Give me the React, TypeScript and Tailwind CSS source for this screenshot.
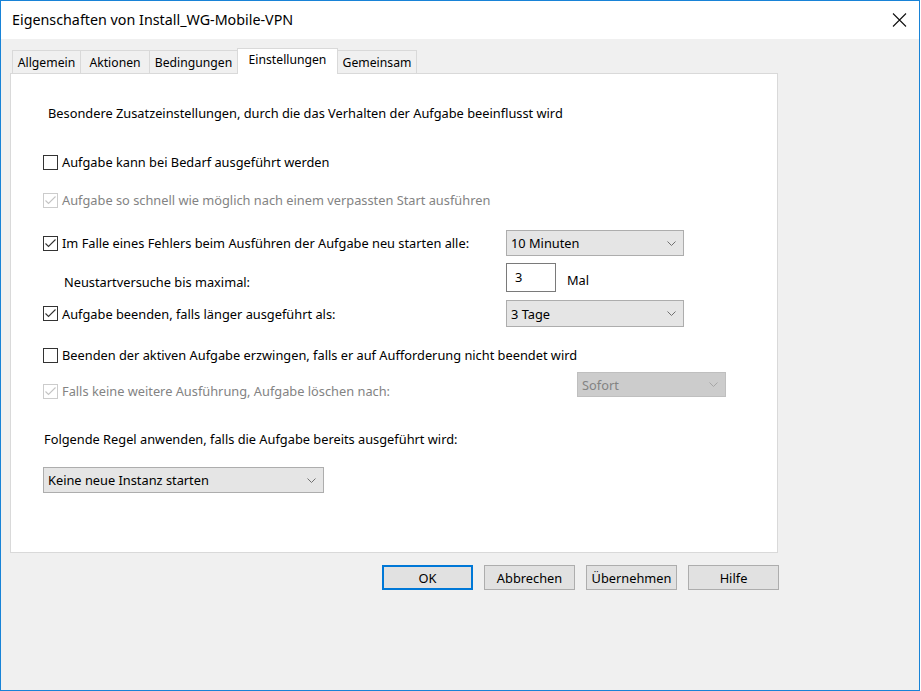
import React from "react";

const font = { fontFamily: '"Noto Sans", "Open Sans", sans-serif' };

function Check({ checked, disabled }: { checked?: boolean; disabled?: boolean }) {
  return (
    <span
      className={
        "flex h-[15px] w-[15px] shrink-0 items-center justify-center border bg-white " +
        (disabled ? "border-[#cccccc]" : "border-[#333333]")
      }
    >
      {checked && (
        <svg width="13" height="13" viewBox="0 0 13 13">
          <polyline
            points="1.5,6.5 4.5,9.5 11.5,2.5"
            fill="none"
            stroke={disabled ? "#c4c4c4" : "#333333"}
            strokeWidth="1.1"
          />
        </svg>
      )}
    </span>
  );
}

function CheckRow({
  label,
  checked,
  disabled,
}: {
  label: string;
  checked?: boolean;
  disabled?: boolean;
}) {
  return (
    <div className="flex h-[20px] items-center gap-[4px]">
      <Check checked={checked} disabled={disabled} />
      <span className={"whitespace-nowrap " + (disabled ? "text-[#838383]" : "text-black")}>{label}</span>
    </div>
  );
}

function Chevron({ disabled }: { disabled?: boolean }) {
  return (
    <svg width="9" height="5" viewBox="0 0 9 5">
      <polyline
        points="0.5,0.5 4.5,4.5 8.5,0.5"
        fill="none"
        stroke={disabled ? "#a6a6a6" : "#707070"}
        strokeWidth="1"
      />
    </svg>
  );
}

function Combo({
  value,
  width,
  height,
  disabled,
}: {
  value: string;
  width: string;
  height: string;
  disabled?: boolean;
}) {
  return (
    <div
      className={
        "flex shrink-0 items-center justify-between border pl-[4px] pr-[7px] " +
        width +
        " " +
        height +
        " " +
        (disabled
          ? "border-[#bfbfbf] bg-[#cccccc] text-[#838383]"
          : "border-[#adadad] bg-[#e5e5e5] text-black")
      }
    >
      <span>{value}</span>
      <Chevron disabled={disabled} />
    </div>
  );
}

function Btn({ label, primary }: { label: string; primary?: boolean }) {
  return (
    <div
      className={
        "flex h-[25px] w-[91px] items-center justify-center bg-[#e1e1e1] " +
        (primary ? "border-2 border-[#0078d7]" : "border border-[#adadad]")
      }
    >
      {label}
    </div>
  );
}

function Tab({ label, width, active }: { label: string; width: string; active?: boolean }) {
  if (active) {
    return (
      <div
        className={
          "relative z-10 -mb-px flex h-[26px] items-start justify-center border border-b-0 border-[#d9d9d9] bg-white pt-[3px] text-[12.2px] " +
          width
        }
      >
        {label}
      </div>
    );
  }
  return (
    <div
      className={
        "flex h-[23px] items-center justify-center border border-r-0 border-b-0 border-[#d9d9d9] bg-[#f0f0f0] pt-[1px] text-[12.2px] " +
        width
      }
    >
      {label}
    </div>
  );
}

export default function App() {
  return (
    <div className="h-[691px] w-[921px] bg-white text-[12.8px] leading-[16px]" style={font}>
      <div className="flex h-[691px] w-[920px] flex-col border border-[#1883d7] bg-[#f0f0f0]">
        {/* title bar */}
        <div className="flex h-[38px] shrink-0 items-center justify-between bg-white pl-[11px] pr-[12px]">
          <span className="text-[14.3px] text-black">Eigenschaften von Install_WG-Mobile-VPN</span>
          <svg width="15" height="14" viewBox="0 0 15 14">
            <path d="M1 0.5 L14 13.5 M14 0.5 L1 13.5" stroke="#111" strokeWidth="1.1" />
          </svg>
        </div>

        <div className="flex flex-col pl-[9px] pt-[9px]">
          {/* tabs */}
          <div className="flex items-end pl-[2px]">
            <Tab label="Allgemein" width="w-[68px]" />
            <Tab label="Aktionen" width="w-[69px]" />
            <div className="flex h-[23px] w-[89px] items-center justify-center border border-b-0 border-[#d9d9d9] bg-[#f0f0f0] pt-[1px] text-[12.2px]">
              Bedingungen
            </div>
            <div className="-ml-[1px]">
              <Tab label="Einstellungen" width="w-[101px]" active />
            </div>
            <div className="-ml-[1px] flex h-[23px] w-[80px] items-center justify-center border border-b-0 border-[#d9d9d9] bg-[#f0f0f0] pt-[1px] text-[12.2px]">
              Gemeinsam
            </div>
          </div>

          {/* panel */}
          <div className="flex h-[480px] w-[768px] flex-col border border-[#d9d9d9] bg-white pl-[32px] pt-[31px]">
            <div className="h-[16px] pl-[5px]">
              Besondere Zusatzeinstellungen, durch die das Verhalten der Aufgabe beeinflusst wird
            </div>

            <div className="mt-[31px]">
              <CheckRow label="Aufgabe kann bei Bedarf ausgeführt werden" />
            </div>
            <div className="mt-[18px]">
              <CheckRow
                label="Aufgabe so schnell wie möglich nach einem verpassten Start ausführen"
                checked
                disabled
              />
            </div>

            <div className="mt-[20px] flex h-[26px] items-center">
              <div className="w-[463px]">
                <CheckRow
                  label="Im Falle eines Fehlers beim Ausführen der Aufgabe neu starten alle:"
                  checked
                />
              </div>
              <Combo value="10 Minuten" width="w-[178px]" height="h-[26px]" />
            </div>

            <div className="mt-[7px] flex h-[29px] items-start">
              <div className="w-[463px] pl-[21px] pt-[11px]">Neustartversuche bis maximal:</div>
              <div className="flex h-[29px] w-[50px] items-start border border-[#7a7a7a] bg-white pl-[8px] pt-[5px]">
                3
              </div>
              <div className="pl-[11px] pt-[9px]">Mal</div>
            </div>

            <div className="mt-[8px] flex h-[27px] items-center">
              <div className="w-[463px]">
                <CheckRow label="Aufgabe beenden, falls länger ausgeführt als:" checked />
              </div>
              <Combo value="3 Tage" width="w-[178px]" height="h-[27px]" />
            </div>

            <div className="mt-[18px]">
              <CheckRow label="Beenden der aktiven Aufgabe erzwingen, falls er auf Aufforderung nicht beendet wird" />
            </div>

            <div className="mt-[7px] flex h-[29px] items-start">
              <div className="w-[534px] pt-[9px]">
                <CheckRow
                  label="Falls keine weitere Ausführung, Aufgabe löschen nach:"
                  checked
                  disabled
                />
              </div>
              <Combo value="Sofort" width="w-[149px]" height="h-[25px]" disabled />
            </div>

            <div className="mt-[30px] h-[16px] pl-[1px]">
              Folgende Regel anwenden, falls die Aufgabe bereits ausgeführt wird:
            </div>

            <div className="mt-[20px]">
              <Combo value="Keine neue Instanz starten" width="w-[281px]" height="h-[26px]" />
            </div>
          </div>

          {/* buttons */}
          <div className="mt-[12px] flex w-[769px] justify-end gap-[11px]">
            <Btn label="OK" primary />
            <Btn label="Abbrechen" />
            <Btn label="Übernehmen" />
            <Btn label="Hilfe" />
          </div>
        </div>
      </div>
    </div>
  );
}
